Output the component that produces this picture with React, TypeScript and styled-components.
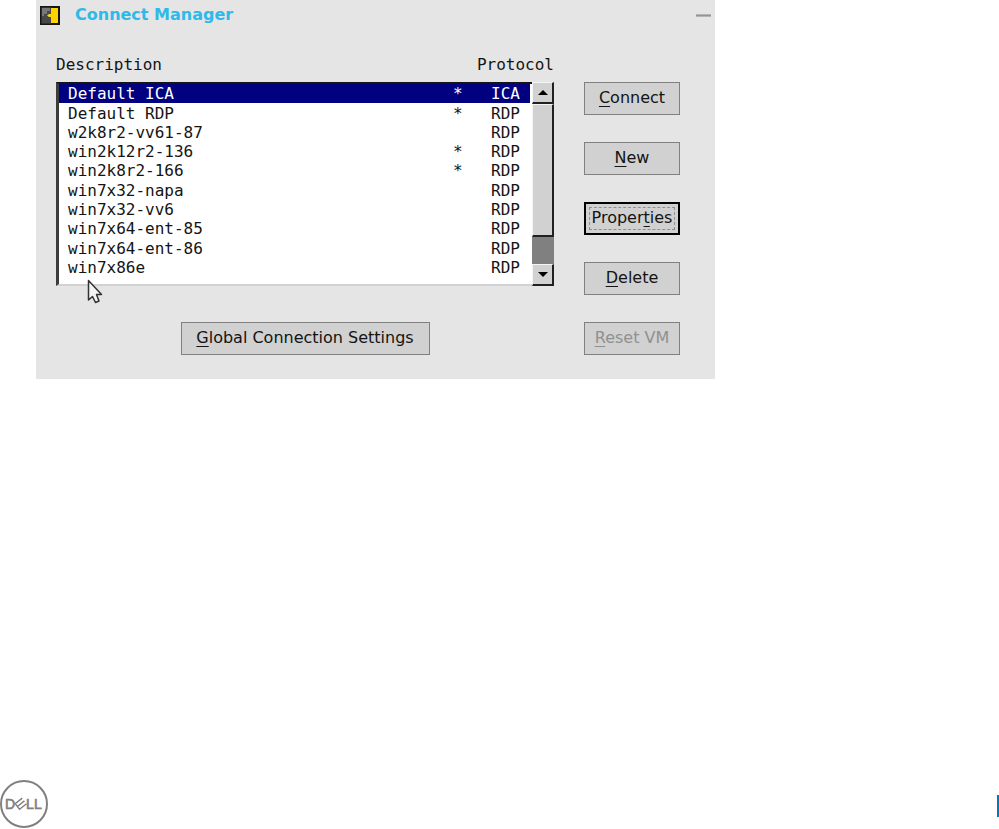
import React, { useState } from "react";
import styled, { createGlobalStyle, css } from "styled-components";

const GlobalStyle = createGlobalStyle`
  *, *::before, *::after { box-sizing: border-box; }
  body {
    margin: 0;
    background: #ffffff;
    color: #141414;
    font-family: "DejaVu Sans", sans-serif;
    font-size: 16px;
  }
`;

const Page = styled.div`
  min-height: 100vh;
  display: flex;
  flex-direction: column;
`;

const Dialog = styled.main`
  width: calc(100% - 36px);
  max-width: 679px;
  margin-left: 36px;
  background: #e5e5e5;
`;

const TitleBar = styled.header`
  display: flex;
  align-items: center;
  gap: 15px;
  height: 30px;
  padding: 0 4px;
`;

const Title = styled.h1`
  flex: 1;
  margin: 0;
  font-size: 16px;
  line-height: 20px;
  font-weight: bold;
  color: #2fb9e9;
`;

const MinimizeButton = styled.button`
  display: flex;
  align-items: center;
  padding: 0;
  border: 0;
  background: none;
`;

const Content = styled.div`
  display: flex;
  gap: 30px;
  padding: 24px 35px 24px 20px;
`;

const ListColumn = styled.div`
  flex: 1;
  min-width: 0;
  display: flex;
  flex-direction: column;
  align-items: center;
  gap: 36px;
`;

const ListArea = styled.div`
  width: 100%;
  display: grid;
  grid-template-columns: minmax(0, 1fr) 22px;
  grid-template-rows: 28px auto;
`;

const ConnectionTable = styled.table`
  grid-area: 1 / 1 / 3 / 3;
  display: block;
  font-family: "DejaVu Sans Mono", monospace;
  font-size: 16px;
  line-height: 18px;
`;

const TableHead = styled.thead`
  display: block;
  height: 28px;
`;

const HeadRow = styled.tr`
  display: flex;
  justify-content: space-between;
`;

const HeadCell = styled.th`
  padding: 2px 0 0;
  font-weight: normal;
  text-align: left;
`;

const TableBody = styled.tbody`
  display: grid;
  grid-auto-rows: 1fr;
  height: 204px;
  padding: 0 24px 7px 0;
  border: solid;
  border-width: 2px 0 2px 3px;
  border-color: #141414 #e5e5e5 #d2d2d2 #3c3c3c;
  background: #ffffff;
`;

const Row = styled.tr<{ $selected: boolean }>`
  display: grid;
  grid-template-columns: minmax(0, 1fr) 10px 29px;
  column-gap: 28px;
  align-items: end;
  padding: 0 10px 0 9px;
  cursor: default;
  background: ${(p) => (p.$selected ? "#000080" : "#ffffff")};
  color: ${(p) => (p.$selected ? "#ffffff" : "#141414")};
`;

const Cell = styled.td`
  padding: 0;
  white-space: nowrap;
`;

const ScrollBar = styled.div`
  grid-area: 2 / 2 / 3 / 3;
  display: flex;
  flex-direction: column;
  background: #808080;
`;

const raised = css`
  border: solid;
  border-width: 1px 2px 2px 1px;
  border-color: #f4f4f4 #202020 #202020 #f4f4f4;
  background: #d1d1d1;
`;

const ScrollButton = styled.button`
  ${raised}
  display: flex;
  align-items: center;
  justify-content: center;
  height: 22px;
  padding: 0;
`;

const ScrollTrack = styled.div`
  flex: 1;
`;

const ScrollThumb = styled.div`
  ${raised}
  height: 83%;
`;

const Actions = styled.div`
  display: flex;
  flex-direction: column;
  gap: 27px;
  width: 96px;
  padding-top: 28px;
`;

const ActionButton = styled.button<{ $wide?: boolean; $default?: boolean }>`
  width: ${(p) => (p.$wide ? "249px" : "100%")};
  height: 33px;
  padding: 0 0 2px;
  border: ${(p) => (p.$default ? "2px solid #000000" : "1px solid #808080")};
  outline: ${(p) => (p.$default ? "1px dashed #909090" : "none")};
  outline-offset: -6px;
  background: #d1d1d1;
  color: #141414;
  font-family: "DejaVu Sans", sans-serif;
  font-size: 16px;
  line-height: 20px;
  white-space: nowrap;

  &:disabled {
    color: #909090;
  }
`;

const AccessKey = styled.span`
  text-decoration: underline;
  text-decoration-thickness: 1px;
  text-underline-offset: 3px;
  text-decoration-skip-ink: none;
`;

const Pointer = styled.svg`
  position: absolute;
  left: 87px;
  top: 279px;
  pointer-events: none;
`;

const Footer = styled.footer`
  display: flex;
  align-items: center;
  justify-content: space-between;
  margin-top: auto;
`;

const PageMark = styled.span`
  width: 2px;
  height: 22px;
  margin-top: 3px;
  background: #0079b8;
`;

const connections = [
  { name: "Default ICA", auto: true, protocol: "ICA" },
  { name: "Default RDP", auto: true, protocol: "RDP" },
  { name: "w2k8r2-vv61-87", auto: false, protocol: "RDP" },
  { name: "win2k12r2-136", auto: true, protocol: "RDP" },
  { name: "win2k8r2-166", auto: true, protocol: "RDP" },
  { name: "win7x32-napa", auto: false, protocol: "RDP" },
  { name: "win7x32-vv6", auto: false, protocol: "RDP" },
  { name: "win7x64-ent-85", auto: false, protocol: "RDP" },
  { name: "win7x64-ent-86", auto: false, protocol: "RDP" },
  { name: "win7x86e", auto: false, protocol: "RDP" },
];

const actions = [
  { label: "Connect", key: 0 },
  { label: "New", key: 0 },
  { label: "Properties", key: 6, isDefault: true },
  { label: "Delete", key: 0 },
  { label: "Reset VM", key: 0, disabled: true },
];

function KeyLabel({ text, at }: { text: string; at: number }) {
  return (
    <>
      {text.slice(0, at)}
      <AccessKey>{text[at]}</AccessKey>
      {text.slice(at + 1)}
    </>
  );
}

function AppIcon() {
  return (
    <svg width="20" height="19" viewBox="0 0 20 19" aria-hidden="true">
      <rect width="20" height="19" fill="#151515" />
      <rect x="1.500" y="1.500" width="10" height="16" fill="#484848" />
      <path d="M2 2H10V5H7V8H4V10H2Z" fill="#777777" />
      <path d="M11 2H18V17H11V11H9L7 9.500L9 8H11Z" fill="#ffd500" />
    </svg>
  );
}

function Arrow({ down }: { down?: boolean }) {
  return (
    <svg width="10" height="6" viewBox="0 0 10 6" aria-hidden="true">
      <path d={down ? "M0 0H10L5 5Z" : "M0 5H10L5 0Z"} fill="#000000" />
    </svg>
  );
}

function DellLogo() {
  return (
    <svg width="49" height="49" viewBox="0 0 49 49" role="img" aria-label="Dell">
      <circle cx="24" cy="24" r="23" fill="none" stroke="#808080" strokeWidth="2" />
      <g
        fill="#808080"
        stroke="#808080"
        strokeWidth="0.6"
        fontFamily="Liberation Sans, sans-serif"
        fontSize="14"
      >
        <text x="5" y="29">D</text>
        <text x="26" y="29">L</text>
        <text x="34" y="29">L</text>
      </g>
      <g transform="translate(20.5 24) rotate(-38)" fill="none" stroke="#808080" strokeWidth="1.4">
        <path d="M5 -3.500H-4V3.500H5M-4 0H5" />
      </g>
    </svg>
  );
}

export default function App() {
  const [selected, setSelected] = useState(0);
  return (
    <Page>
      <GlobalStyle />
      <Dialog>
        <TitleBar>
          <AppIcon />
          <Title>Connect Manager</Title>
          <MinimizeButton aria-label="Minimize">
            <svg width="15" height="3" viewBox="0 0 15 3" aria-hidden="true">
              <rect width="15" height="3" fill="#b4b4b4" />
              <rect y="1" width="15" height="1" fill="#949494" />
            </svg>
          </MinimizeButton>
        </TitleBar>
        <Content>
          <ListColumn>
            <ListArea>
              <ConnectionTable>
                <TableHead>
                  <HeadRow>
                    <HeadCell scope="col">Description</HeadCell>
                    <HeadCell scope="col">Protocol</HeadCell>
                  </HeadRow>
                </TableHead>
                <TableBody>
                  {connections.map((c, i) => (
                    <Row
                      key={c.name}
                      $selected={i === selected}
                      aria-selected={i === selected}
                      onClick={() => setSelected(i)}
                    >
                      <Cell>{c.name}</Cell>
                      <Cell>{c.auto ? "*" : ""}</Cell>
                      <Cell>{c.protocol}</Cell>
                    </Row>
                  ))}
                </TableBody>
              </ConnectionTable>
              <ScrollBar>
                <ScrollButton aria-label="Scroll up">
                  <Arrow />
                </ScrollButton>
                <ScrollTrack>
                  <ScrollThumb />
                </ScrollTrack>
                <ScrollButton aria-label="Scroll down">
                  <Arrow down />
                </ScrollButton>
              </ScrollBar>
            </ListArea>
            <ActionButton $wide>
              <KeyLabel text="Global Connection Settings" at={0} />
            </ActionButton>
          </ListColumn>
          <Actions>
            {actions.map((a) => (
              <ActionButton key={a.label} $default={a.isDefault} disabled={a.disabled}>
                <KeyLabel text={a.label} at={a.key} />
              </ActionButton>
            ))}
          </Actions>
        </Content>
      </Dialog>
      <Pointer width="17" height="26" viewBox="0 0 17 26" aria-hidden="true">
        <path
          d="M1.500 1.500V21L5.500 17.500L8.500 23.500L12 22L9.500 15.500H14.500Z"
          fill="#f4f4f4"
          stroke="#333333"
          strokeWidth="1.500"
          strokeLinejoin="round"
        />
      </Pointer>
      <Footer>
        <DellLogo />
        <PageMark />
      </Footer>
    </Page>
  );
}
